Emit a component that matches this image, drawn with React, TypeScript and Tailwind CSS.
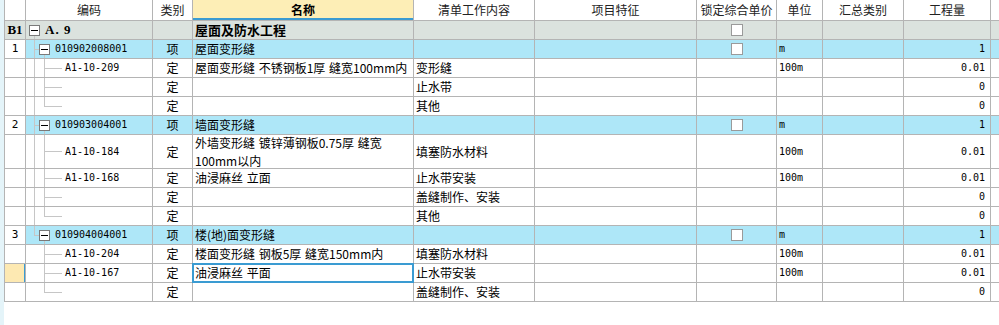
import React from "react";

type Row = {
  kind: "B" | "Q" | "D";
  num?: string;
  code?: string;
  cat?: string;
  name?: string | string[];
  content?: string;
  unit?: string;
  qty?: string;
  check?: boolean;
  tall?: boolean;
  lastChild?: boolean;
  lastGroup?: boolean;
  inLastGroup?: boolean;
  selected?: boolean;
};

const rows: Row[] = [
  { kind: "B", num: "B1", code: "A.9", name: "屋面及防水工程", check: true },
  { kind: "Q", num: "1", code: "010902008001", cat: "项", name: "屋面变形缝", unit: "m", qty: "1", check: true },
  { kind: "D", code: "A1-10-209", cat: "定", name: "屋面变形缝 不锈钢板1厚 缝宽100mm内", content: "变形缝", unit: "100m", qty: "0.01" },
  { kind: "D", cat: "定", content: "止水带", qty: "0" },
  { kind: "D", cat: "定", content: "其他", qty: "0", lastChild: true },
  { kind: "Q", num: "2", code: "010903004001", cat: "项", name: "墙面变形缝", unit: "m", qty: "1", check: true },
  { kind: "D", code: "A1-10-184", cat: "定", name: ["外墙变形缝 镀锌薄钢板0.75厚 缝宽", "100mm以内"], content: "填塞防水材料", unit: "100m", qty: "0.01", tall: true },
  { kind: "D", code: "A1-10-168", cat: "定", name: "油浸麻丝 立面", content: "止水带安装", unit: "100m", qty: "0.01" },
  { kind: "D", cat: "定", content: "盖缝制作、安装", qty: "0" },
  { kind: "D", cat: "定", content: "其他", qty: "0", lastChild: true },
  { kind: "Q", num: "3", code: "010904004001", cat: "项", name: "楼(地)面变形缝", unit: "m", qty: "1", check: true, lastGroup: true },
  { kind: "D", code: "A1-10-204", cat: "定", name: "楼面变形缝 钢板5厚 缝宽150mm内", content: "填塞防水材料", unit: "100m", qty: "0.01", inLastGroup: true },
  { kind: "D", code: "A1-10-167", cat: "定", name: "油浸麻丝 平面", content: "止水带安装", unit: "100m", qty: "0.01", inLastGroup: true, selected: true },
  { kind: "D", cat: "定", content: "盖缝制作、安装", qty: "0", inLastGroup: true, lastChild: true },
];

const GRID =
  "grid grid-cols-[21px_127px_40px_221px_121px_162px_80px_46px_81px_87px_1fr]";
const CELL = "border-r border-b border-[#b4b4b4] relative overflow-hidden";
const CJK = "font-['Noto_Sans_CJK_SC',sans-serif] text-[12px] leading-[18px]";
const MONO = "font-['DejaVu_Sans_Mono',monospace] text-[10px] leading-[18px]";
const LINE = "bg-[#c6c6c6] absolute";

function MinusBox({ left }: { left: number }) {
  return (
    <div
      className="absolute top-[4px] w-[11px] h-[11px] border border-[#7a7a7a] bg-white flex items-center justify-center z-10"
      style={{ left }}
    >
      <div className="w-[7px] h-px bg-black" />
    </div>
  );
}

function Tree({ r }: { r: Row }) {
  const mid = r.tall ? 16 : 9;
  if (r.kind === "B") {
    return (
      <>
        <MinusBox left={3} />
        <div className={`${LINE} left-[8px] w-px top-[15px] bottom-[-1px]`} />
      </>
    );
  }
  if (r.kind === "Q") {
    return (
      <>
        {r.lastGroup ? (
          <div className={`${LINE} left-[8px] w-px top-0 h-[10px]`} />
        ) : (
          <div className={`${LINE} left-[8px] w-px top-0 bottom-[-1px]`} />
        )}
        <div className={`${LINE} left-[8px] w-[5px] h-px top-[9px]`} />
        <MinusBox left={13} />
        <div className={`${LINE} left-[18px] w-px top-[15px] bottom-[-1px]`} />
      </>
    );
  }
  return (
    <>
      {!r.inLastGroup && <div className={`${LINE} left-[8px] w-px top-0 bottom-[-1px]`} />}
      {r.lastChild ? (
        <div className={`${LINE} left-[18px] w-px top-0`} style={{ height: mid + 1 }} />
      ) : (
        <div className={`${LINE} left-[18px] w-px top-0 bottom-[-1px]`} />
      )}
      <div className={`${LINE} left-[18px] w-[18px] h-px`} style={{ top: mid }} />
    </>
  );
}

function Check() {
  return <div className="w-[12px] h-[12px] border border-[#9a9a9a] bg-white" />;
}

function DataRow({ r }: { r: Row }) {
  const h = r.tall ? "h-[34px]" : "h-[19px]";
  const bg = r.kind === "B" ? "bg-[#dbe2de]" : r.kind === "Q" ? "bg-[#aee7f8]" : "bg-white";
  const numBg = r.kind === "B" ? "bg-[#dbe2de]" : r.selected ? "bg-[#fde9b2]" : "bg-white";
  const names = Array.isArray(r.name) ? r.name : r.name ? [r.name] : [];
  return (
    <div className={`${GRID} ${h}`}>
      <div className={`${CELL} ${numBg} flex items-center justify-center`}>
        {r.kind === "B" ? (
          <span className="font-['Liberation_Serif',serif] font-bold text-[13px] leading-[18px] text-black">{r.num}</span>
        ) : (
          <span className={`${MONO} text-[11px] text-black`}>{r.num}</span>
        )}
        {r.selected && <div className="absolute right-[-1px] top-0 bottom-[-1px] w-[2px] bg-[#3a9bd2]" />}
      </div>
      <div className={`${CELL} ${r.kind === "D" ? "bg-white" : bg} flex items-center`}>
        <Tree r={r} />
        {r.kind === "B" && (
          <span className="pl-[19px] font-['Liberation_Serif',serif] font-bold text-[13px] leading-[18px] tracking-[1px] text-black">A. 9</span>
        )}
        {r.kind === "Q" && <span className={`${MONO} pl-[29px] text-[10.5px] text-black`}>{r.code}</span>}
        {r.kind === "D" && r.code && <span className={`${MONO} pl-[39px] text-black`}>{r.code}</span>}
      </div>
      <div className={`${CELL} ${r.kind === "D" ? "bg-white" : bg} flex items-center justify-center`}>
        <span className={`${CJK} text-black`}>{r.cat}</span>
      </div>
      <div className={`${CELL} ${bg} flex flex-col justify-center pl-[2px] ${r.selected ? "overflow-visible" : ""}`}>
        {names.map((n, i) => (
          <div
            key={i}
            className={`${CJK} ${r.tall ? "leading-[16px]" : ""} ${r.kind === "B" ? "font-bold text-[13px]" : ""} [word-spacing:1px] whitespace-nowrap text-black`}
          >
            {n}
          </div>
        ))}
        {r.selected && (
          <div className="absolute left-[-1px] top-[-1px] right-[-1px] bottom-[-1px] border-2 border-[#3a9bd2]" />
        )}
      </div>
      <div className={`${CELL} ${bg} flex items-center pl-[2px]`}>
        <span className={`${CJK} whitespace-nowrap text-black`}>{r.content}</span>
      </div>
      <div className={`${CELL} ${bg}`} />
      <div className={`${CELL} ${bg} flex items-center justify-center`}>{r.check && <Check />}</div>
      <div className={`${CELL} ${bg} flex items-center pl-[2px]`}>
        <span className={`${MONO} text-black`}>{r.unit}</span>
      </div>
      <div className={`${CELL} ${bg}`} />
      <div className={`${CELL} ${bg} flex items-center justify-end pr-[5px]`}>
        <span className={`${MONO} text-[10.5px] text-black`}>{r.qty}</span>
      </div>
      <div className={`border-b border-[#b4b4b4] ${bg}`} />
    </div>
  );
}

function Header() {
  const hc = `${CELL} bg-white flex items-center justify-center ${CJK} text-[#222]`;
  return (
    <div className={`${GRID} h-[21px]`}>
      <div className={`${CELL} bg-white`} />
      <div className={hc}>编码</div>
      <div className={hc}>类别</div>
      <div className={`${CELL} bg-[#fdeeb6] flex items-center justify-center ${CJK} font-bold text-black`}>
        名称
        <div className="absolute left-0 right-0 bottom-0 h-[2px] bg-[#3a9bd2]" />
      </div>
      <div className={hc}>清单工作内容</div>
      <div className={hc}>项目特征</div>
      <div className={hc}>锁定综合单价</div>
      <div className={hc}>单位</div>
      <div className={hc}>汇总类别</div>
      <div className={hc}>工程量</div>
      <div className="border-b border-[#b4b4b4] bg-white" />
    </div>
  );
}

export default function App() {
  return (
    <div className="w-[999px] h-[325px] bg-white flex overflow-hidden">
      <div className="w-[4px] h-full bg-[#e4f4f9] shrink-0" />
      <div className="flex-1 h-full">
        <div className="border-l border-[#b4b4b4]">
          <Header />
          {rows.map((r, i) => (
            <DataRow key={i} r={r} />
          ))}
        </div>
      </div>
    </div>
  );
}
